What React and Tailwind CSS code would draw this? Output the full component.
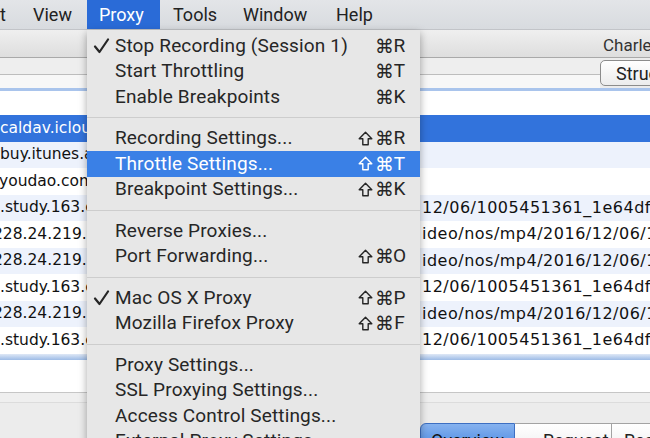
import React from "react";

const menuFont = { fontFamily: "Roboto, 'DejaVu Sans', sans-serif" };
const tableFont = { fontFamily: "'DejaVu Sans', sans-serif" };

const menuItems = [
  { label: "Stop Recording (Session 1)", key: "R", check: true },
  { label: "Start Throttling", key: "T" },
  { label: "Enable Breakpoints", key: "K" },
  { sep: true },
  { label: "Recording Settings...", key: "R", shift: true },
  { label: "Throttle Settings...", key: "T", shift: true, active: true },
  { label: "Breakpoint Settings...", key: "K", shift: true },
  { sep: true },
  { label: "Reverse Proxies..." },
  { label: "Port Forwarding...", key: "O", shift: true },
  { sep: true },
  { label: "Mac OS X Proxy", key: "P", shift: true, check: true },
  { label: "Mozilla Firefox Proxy", key: "F", shift: true },
  { sep: true },
  { label: "Proxy Settings..." },
  { label: "SSL Proxying Settings..." },
  { label: "Access Control Settings..." },
  { label: "External Proxy Settings..." },
];

const rows = [
  { host: "", path: "", h: "h-[24px]" },
  { host: "caldav.icloud.com", path: "", selected: true },
  { host: "buy.itunes.apple.com", path: "" },
  { host: "youdao.com", path: "", shift: true },
  { host: ".study.163.com", path: "12/06/1005451361_1e64df5b.mp4" },
  { host: "228.24.219.30", path: "ideo/nos/mp4/2016/12/06/1005451361", ip: true },
  { host: "228.24.219.30", path: "ideo/nos/mp4/2016/12/06/1005451361", ip: true },
  { host: ".study.163.com", path: "12/06/1005451361_1e64df5b.mp4" },
  { host: "228.24.219.30", path: "ideo/nos/mp4/2016/12/06/1005451361", ip: true },
  { host: ".study.163.com", path: "12/06/1005451361_1e64df5b.mp4" },
];

const Check = ({ white }) => (
  <svg width="17" height="16" viewBox="0 0 17 16">
    <path
      d="M2 8.5 L6.5 14 L15 1.5"
      fill="none"
      stroke={white ? "#fff" : "#262626"}
      strokeWidth="2.2"
      strokeLinecap="round"
      strokeLinejoin="round"
    />
  </svg>
);

// outlined shift arrow
const Shift = ({ white }) => (
  <svg width="15" height="15" viewBox="0 0 15 15" className="mr-[2px]">
    <path
      d="M7.5 1.2 L13.8 7.8 L10.2 7.8 L10.2 13.8 L4.8 13.8 L4.8 7.8 L1.2 7.8 Z"
      fill="none"
      stroke={white ? "#fff" : "#262626"}
      strokeWidth="1.4"
      strokeLinejoin="round"
    />
  </svg>
);

const ProxyMenu = () => (
  <div
    className="absolute left-[87px] top-[30px] w-[333px] h-[440px] bg-[#e7e7e7] pt-[3px] shadow-[0_3px_8px_rgba(0,0,0,0.35)] text-[19px] tracking-[0.15px]"
    style={menuFont}
  >
    {menuItems.map((it, i) =>
      it.sep ? (
        <div key={i} className="h-[16px] flex items-center">
          <div className="w-full h-px bg-[#cdcdcd]" />
        </div>
      ) : (
        <div
          key={i}
          className={`flex items-center h-[25.5px] pr-[13px] ${
            it.active ? "bg-[#3a80e6] text-white" : "text-[#262626]"
          }`}
        >
          <span className="w-[28px] flex-none pl-[6px] flex items-center">
            {it.check && <Check white={it.active} />}
          </span>
          <span className="flex-1 whitespace-nowrap">{it.label}</span>
          {it.key && (
            <span className="flex items-center whitespace-nowrap">
              {it.shift && <Shift white={it.active} />}
              <span className="w-[17px] text-center" style={{ fontFamily: "'DejaVu Sans', sans-serif" }}>
                ⌘
              </span>
              <span className="w-[15px] text-center">{it.key}</span>
            </span>
          )}
        </div>
      )
    )}
  </div>
);

export default function App() {
  return (
    <div className="relative w-[650px] h-[438px] overflow-hidden bg-[#ececec]">
      {/* menu bar */}
      <div
        className="h-[30px] flex items-center bg-gradient-to-b from-[#e3e5e8] to-[#d8dbdf] border-b border-[#c2c4c8] text-[18px] text-[#222]"
        style={menuFont}
      >
        <div className="w-[20px] h-full flex items-center">t</div>
        <div className="w-[67px] h-full flex items-center pl-[13px]">View</div>
        <div className="w-[73px] h-full flex items-center pl-[12px] bg-[#2a6bd7] text-white">Proxy</div>
        <div className="w-[71px] h-full flex items-center pl-[13px]">Tools</div>
        <div className="w-[92px] h-full flex items-center pl-[12px]">Window</div>
        <div className="h-full flex items-center pl-[13px]">Help</div>
      </div>

      {/* window title */}
      <div
        className="h-[28px] flex items-center pt-[4px] pl-[603px] bg-gradient-to-b from-[#efefef] to-[#dedede] border-b border-[#a9a9a9] text-[17px] text-[#333] whitespace-nowrap overflow-hidden"
        style={menuFont}
      >
        Charles 4.0.2 - Session 1 *
      </div>

      {/* toolbar */}
      <div className="h-[30px] flex overflow-hidden">
        <div className="w-[600px] flex-none flex flex-col">
          <div className="h-[17px] bg-[#eeeeee] border-b border-[#bdbdbd]" />
          <div className="flex-1 bg-[#f7f7f7]" />
        </div>
        <div
          className="flex-none w-[120px] h-[26px] mt-[2px] rounded-[5px] border border-[#8c8c8c] bg-gradient-to-b from-white to-[#ececec] pl-[15px] flex items-center text-[18px] text-[#222]"
          style={menuFont}
        >
          Structure
        </div>
      </div>

      {/* table */}
      <div className="h-[3px] bg-[#a9c4ec]" />
      <div style={tableFont}>
        {rows.map((r, i) => (
          <div
            key={i}
            className={`flex items-center ${r.h || "h-[26.5px]"} ${
              r.selected
                ? "bg-[#3273dc] text-white"
                : i % 2 === 1
                ? "bg-white text-[#111]"
                : i === 0
                ? "bg-white"
                : "bg-[#edf2fc] text-[#111]"
            }`}
          >
            <div className="w-[87px] flex-none overflow-hidden whitespace-nowrap text-[15.5px]">
              <span className={r.ip ? "-ml-[7px] inline-block" : r.shift ? "-ml-[1px] inline-block" : ""}>
                {r.host}
              </span>
            </div>
            <div className="w-[335px] flex-none" />
            <div className="flex-1 overflow-hidden whitespace-nowrap text-[16px] tracking-[0.5px]">{r.path}</div>
          </div>
        ))}
      </div>
      <div className="h-[6px] bg-gradient-to-b from-[#dfe8f6] to-[#9dbbe6]" />
      <div className="h-[33px] bg-white border-b border-[#c6c6c6]" />

      {/* bottom tabs */}
      <div className="h-[10px] bg-[#efefef] border-b border-[#dcdcdc]" />
      <div className="flex pl-[420px] pt-[20px]" style={menuFont}>
        <div className="w-[95px] h-[26px] flex-none rounded-tl-[6px] border border-[#3d6fc2] bg-gradient-to-b from-[#86b2ef] to-[#4c8ae2] flex justify-center pt-[3px] text-[18px] text-[#111]">
          Overview
        </div>
        <div className="w-[97px] h-[26px] flex-none border-y border-r border-[#a3a3a3] bg-gradient-to-b from-white to-[#f1f1f1] pl-[28px] pt-[3px] text-[18px] text-[#222]">
          Request
        </div>
        <div className="w-[100px] h-[26px] flex-none border-y border-[#a3a3a3] bg-gradient-to-b from-white to-[#f1f1f1] pl-[12px] pt-[3px] text-[18px] text-[#222]">
          Response
        </div>
      </div>

      <ProxyMenu />
    </div>
  );
}
